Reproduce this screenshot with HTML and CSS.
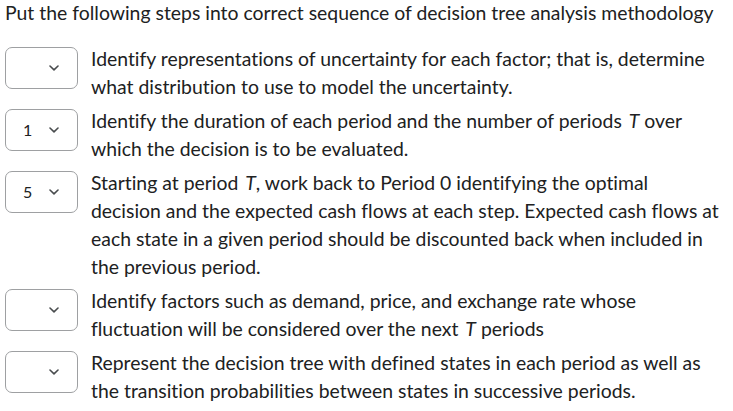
FILE: index.html
```html
<!DOCTYPE html>
<html>
<head>
<meta charset="utf-8">
<link rel="stylesheet" href="styles.css">
</head>
<body>
<div class="question">
  <p class="prompt">Put the following steps into correct sequence of decision tree analysis methodology</p>
  <div class="rows">
    <div class="row">
      <div class="select"><span class="val"></span><svg class="chev" width="10" height="6" viewBox="0 0 10 6"><path d="M1 1 L5 4.8 L9 1" fill="none" stroke="#494c4e" stroke-width="1.6" stroke-linecap="round" stroke-linejoin="round"/></svg></div>
      <div class="text">Identify representations of uncertainty for each factor; that is, determine what distribution to use to model the uncertainty.</div>
    </div>
    <div class="row">
      <div class="select"><span class="val">1</span><svg class="chev" width="10" height="6" viewBox="0 0 10 6"><path d="M1 1 L5 4.8 L9 1" fill="none" stroke="#494c4e" stroke-width="1.6" stroke-linecap="round" stroke-linejoin="round"/></svg></div>
      <div class="text">Identify the duration of each period and the number of periods <i>T</i> over which the decision is to be evaluated.</div>
    </div>
    <div class="row">
      <div class="select"><span class="val">5</span><svg class="chev" width="10" height="6" viewBox="0 0 10 6"><path d="M1 1 L5 4.8 L9 1" fill="none" stroke="#494c4e" stroke-width="1.6" stroke-linecap="round" stroke-linejoin="round"/></svg></div>
      <div class="text">Starting at period <i>T</i>, work back to Period 0 identifying the optimal decision and the expected cash flows at each step. Expected cash flows at each state in a given period should be discounted back when included in the previous period.</div>
    </div>
    <div class="row">
      <div class="select"><span class="val"></span><svg class="chev" width="10" height="6" viewBox="0 0 10 6"><path d="M1 1 L5 4.8 L9 1" fill="none" stroke="#494c4e" stroke-width="1.6" stroke-linecap="round" stroke-linejoin="round"/></svg></div>
      <div class="text">Identify factors such as demand, price, and exchange rate whose fluctuation will be considered over the next <i>T</i> periods</div>
    </div>
    <div class="row">
      <div class="select"><span class="val"></span><svg class="chev" width="10" height="6" viewBox="0 0 10 6"><path d="M1 1 L5 4.8 L9 1" fill="none" stroke="#494c4e" stroke-width="1.6" stroke-linecap="round" stroke-linejoin="round"/></svg></div>
      <div class="text">Represent the decision tree with defined states in each period as well as the transition probabilities between states in successive periods.</div>
    </div>
  </div>
</div>
</body>
</html>
```
FILE: styles.css
```css
html, body {
  margin: 0;
  padding: 0;
  background: #ffffff;
}
body {
  font-family: Lato, "Noto Sans", sans-serif;
  color: #202122;
  font-size: 19.4px;
  line-height: 28px;
  font-variant-ligatures: none;
}
.question {
  padding: 0 13px 0 5px;
}
.prompt {
  margin: -1px -10px 0 0;
  line-height: 28px;
}
.rows {
  margin-top: 18px;
  display: flex;
  flex-direction: column;
  gap: 6px;
}
.row {
  display: grid;
  grid-template-columns: 73px 1fr;
  column-gap: 13px;
  align-items: start;
}
.select {
  box-sizing: border-box;
  margin-top: 2px;
  height: 42px;
  border: 1px solid #9ea0a2;
  border-radius: 7px;
  display: flex;
  align-items: center;
  justify-content: space-between;
  padding: 0 18px 0 17px;
}
.val {
  font-size: 16px;
  color: #202122;
  line-height: 1;
}
.chev {
  display: block;
}
.text i {
  font-style: italic;
  padding-left: 2px;
}
```
